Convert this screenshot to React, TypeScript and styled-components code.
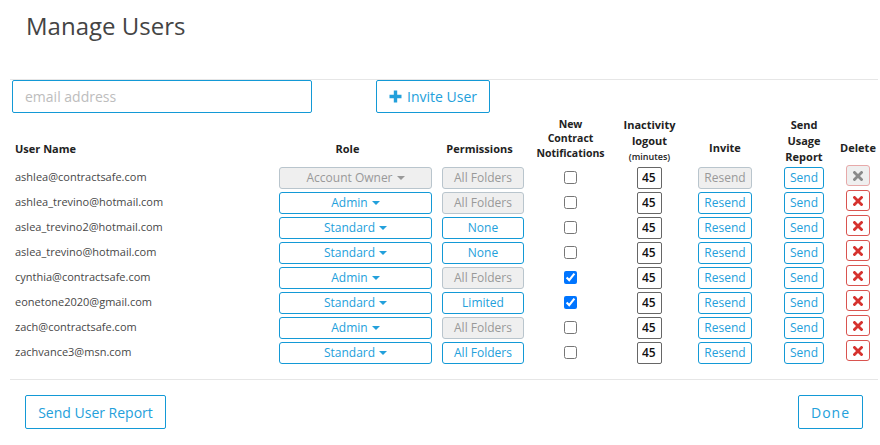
import React from "react";
import styled, { createGlobalStyle, css } from "styled-components";

const GlobalStyle = createGlobalStyle`
  html, body { margin: 0; padding: 0; background: #fff; }
  body { font-family: "Open Sans", "Noto Sans", Arial, sans-serif; color: #444; }
  * { box-sizing: border-box; }
`;

const BLUE = "#1399d6";
const BLUE_TEXT = "#23a0db";

const Page = styled.div`
  width: 880px;
  padding: 9px 2px 0 10px;
`;

const Title = styled.h1`
  margin: 0 0 37px 0;
  padding-left: 16px;
  font-size: 24px;
  line-height: 33px;
  font-weight: 400;
  color: #444;
`;

const Toolbar = styled.div`
  border-top: 1px solid #e6e6e6;
  display: flex;
  align-items: flex-start;
  gap: 64px;
  padding-left: 2px;
`;

const EmailInput = styled.input`
  width: 300px;
  height: 33px;
  border: 1px solid ${BLUE};
  border-radius: 2px;
  padding: 0 12px;
  font-family: inherit;
  font-size: 14px;
  color: #444;
  outline: none;
  &::placeholder { color: #bdbdbd; }
`;

const OutlineButton = styled.button<{ $w?: number }>`
  height: 34px;
  ${(p) => p.$w && css`width: ${p.$w}px;`}
  padding: 0 12px;
  background: #fff;
  border: 1px solid ${BLUE};
  border-radius: 2px;
  color: ${BLUE_TEXT};
  font-family: inherit;
  font-size: 14px;
  display: inline-flex;
  align-items: center;
  justify-content: center;
  gap: 5px;
  cursor: pointer;
`;

const InviteButton = styled(OutlineButton)`
  height: 33px;
  width: 114px;
  padding: 0;
`;

const ReportButton = styled(OutlineButton)`
  width: 141px;
  padding: 0;
`;

const COLS = "264px 163px 92px 83px 75px 76px 82px 26px";

const HeaderRow = styled.div`
  margin-top: 3px;
  height: 49px;
  display: grid;
  grid-template-columns: ${COLS};
  align-items: end;
`;

const HeadCell = styled.div<{ $pb?: number; $pr?: number; $left?: boolean; $small?: boolean }>`
  font-weight: 700;
  font-size: ${(p) => (p.$small ? "10.5px" : "11px")};
  line-height: ${(p) => (p.$small ? "14.5px" : "16px")};
  color: #222;
  text-align: ${(p) => (p.$left ? "left" : "center")};
  padding-bottom: ${(p) => p.$pb ?? 0}px;
  padding-right: ${(p) => p.$pr ?? 0}px;
  padding-left: ${(p) => (p.$left ? 5 : 0)}px;
  white-space: nowrap;
  display: flex;
  flex-direction: column;
  align-items: ${(p) => (p.$left ? "flex-start" : "center")};
`;

const Minutes = styled.span`
  font-size: 9px;
  font-weight: 600;
`;

const Rows = styled.div`
  display: flex;
  flex-direction: column;
`;

const Row = styled.div`
  height: 25px;
  display: grid;
  grid-template-columns: ${COLS};
  align-items: center;
  justify-items: center;
`;

const NameCell = styled.div`
  justify-self: start;
  padding-left: 5px;
  font-size: 11px;
  color: #474747;
  margin-top: -3px;
`;

const SmallButton = styled.button<{ $w: number; $disabled?: boolean }>`
  width: ${(p) => p.$w}px;
  height: 22px;
  padding: 0;
  border-radius: 3px;
  font-family: inherit;
  font-size: 12px;
  display: inline-flex;
  align-items: center;
  justify-content: center;
  gap: 4px;
  cursor: pointer;
  background: ${(p) => (p.$disabled ? "#efefef" : "#fff")};
  border: 1px solid ${(p) => (p.$disabled ? "#b9c5cd" : BLUE)};
  color: ${(p) => (p.$disabled ? "#999" : BLUE_TEXT)};
`;

const Caret = styled.span`
  display: inline-block;
  width: 0;
  height: 0;
  border-left: 4px solid transparent;
  border-right: 4px solid transparent;
  border-top: 4px solid currentColor;
  margin-top: 1px;
`;

const Check = styled.input`
  width: 13px;
  height: 13px;
  margin: 0;
`;

const NumInput = styled.input`
  width: 25px;
  height: 22px;
  border: 1px solid #666;
  border-radius: 2px;
  padding: 0 0 0 4px;
  font-family: inherit;
  font-size: 12px;
  font-weight: 600;
  color: #111;
  outline: none;
`;

const DeleteButton = styled.button<{ $disabled?: boolean }>`
  align-self: start;
  width: 24px;
  height: 21px;
  padding: 0;
  border-radius: 3px;
  display: flex;
  align-items: center;
  justify-content: center;
  cursor: pointer;
  background: ${(p) => (p.$disabled ? "#efefef" : "#fff")};
  border: 1px solid ${(p) => (p.$disabled ? "#e7a9a9" : "#d9534f")};
  color: ${(p) => (p.$disabled ? "#8a8a8a" : "#d6322e")};
`;

const Footer = styled.div`
  margin-top: 14px;
  border-top: 1px solid #e6e6e6;
  padding: 15px 15px 0 15px;
  display: flex;
  justify-content: space-between;
`;

const DoneButton = styled(OutlineButton)`
  width: 65px;
  padding: 0;
  letter-spacing: 1px;
`;

const PlusIcon = () => (
  <svg width="13" height="13" viewBox="0 0 13 13">
    <path d="M6.5 0.5 V12.5 M0.5 6.5 H12.5" stroke="currentColor" strokeWidth="3.4" />
  </svg>
);

const XIcon = () => (
  <svg width="10" height="10" viewBox="0 0 10 10">
    <path d="M1.5 1.5 L8.5 8.5 M8.5 1.5 L1.5 8.5" stroke="currentColor" strokeWidth="2.8" strokeLinecap="square" />
  </svg>
);

type User = {
  email: string;
  role: string;
  perm: string;
  notify: boolean;
  owner?: boolean;
};

const users: User[] = [
  { email: "ashlea@contractsafe.com", role: "Account Owner", perm: "All Folders", notify: false, owner: true },
  { email: "ashlea_trevino@hotmail.com", role: "Admin", perm: "All Folders", notify: false },
  { email: "aslea_trevino2@hotmail.com", role: "Standard", perm: "None", notify: false },
  { email: "aslea_trevino@hotmail.com", role: "Standard", perm: "None", notify: false },
  { email: "cynthia@contractsafe.com", role: "Admin", perm: "All Folders", notify: true },
  { email: "eonetone2020@gmail.com", role: "Standard", perm: "Limited", notify: true },
  { email: "zach@contractsafe.com", role: "Admin", perm: "All Folders", notify: false },
  { email: "zachvance3@msn.com", role: "Standard", perm: "All Folders", notify: false },
];

export default function App() {
  return (
    <Page>
      <GlobalStyle />
      <Title>Manage Users</Title>
      <Toolbar>
        <EmailInput placeholder="email address" />
        <InviteButton>
          <PlusIcon />
          Invite User
        </InviteButton>
      </Toolbar>
      <HeaderRow>
        <HeadCell $left $pb={8}>User Name</HeadCell>
        <HeadCell $pb={8} $pr={16}>Role</HeadCell>
        <HeadCell $pb={8} $pr={7}>Permissions</HeadCell>
        <HeadCell $small $pb={5}>
          <span>New</span>
          <span>Contract</span>
          <span>Notifications</span>
        </HeadCell>
        <HeadCell>
          <span>Inactivity</span>
          <span>logout</span>
          <Minutes>(minutes)</Minutes>
        </HeadCell>
        <HeadCell $pb={9}>Invite</HeadCell>
        <HeadCell>
          <span>Send</span>
          <span>Usage</span>
          <span>Report</span>
        </HeadCell>
        <HeadCell $pb={9}>Delete</HeadCell>
      </HeaderRow>
      <Rows>
        {users.map((u) => {
          const permDisabled = u.perm === "All Folders" && u.role !== "Standard";
          return (
            <Row key={u.email}>
              <NameCell>{u.email}</NameCell>
              <SmallButton $w={153} $disabled={u.owner}>
                {u.role}
                <Caret />
              </SmallButton>
              <SmallButton $w={82} $disabled={permDisabled}>
                {u.perm}
              </SmallButton>
              <Check type="checkbox" defaultChecked={u.notify} />
              <NumInput defaultValue="45" />
              <SmallButton $w={54} $disabled={u.owner}>
                Resend
              </SmallButton>
              <SmallButton $w={40}>Send</SmallButton>
              <DeleteButton $disabled={u.owner}>
                <XIcon />
              </DeleteButton>
            </Row>
          );
        })}
      </Rows>
      <Footer>
        <ReportButton>Send User Report</ReportButton>
        <DoneButton>Done</DoneButton>
      </Footer>
    </Page>
  );
}
